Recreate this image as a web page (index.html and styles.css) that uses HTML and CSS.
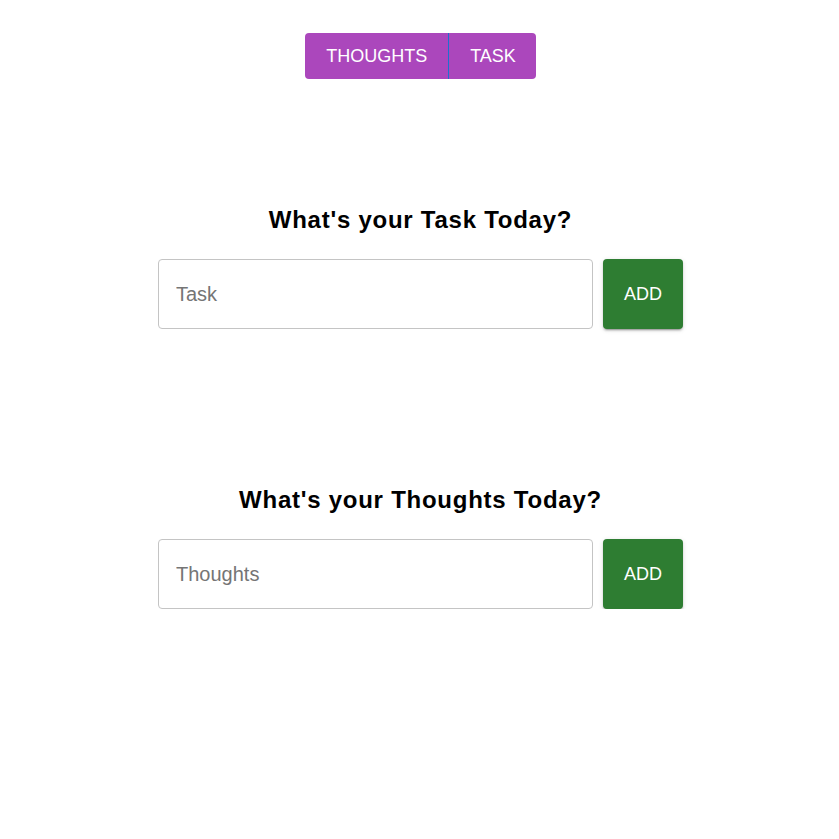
FILE: index.html
```html
<!DOCTYPE html>
<html>
<head>
<meta charset="utf-8">
<link rel="stylesheet" href="styles.css">
</head>
<body>
<div class="page">
  <div class="tabs">
    <button class="tab tab-first">THOUGHTS</button>
    <button class="tab tab-last">TASK</button>
  </div>
  <section class="block block-task">
    <h2 class="title">What's your Task Today?</h2>
    <div class="row">
      <input class="field" type="text" placeholder="Task">
      <button class="add">ADD</button>
    </div>
  </section>
  <section class="block block-thoughts">
    <h2 class="title">What's your Thoughts Today?</h2>
    <div class="row">
      <input class="field" type="text" placeholder="Thoughts">
      <button class="add">ADD</button>
    </div>
  </section>
</div>
</body>
</html>
```
FILE: styles.css
```css
* { box-sizing: border-box; }
html, body { margin: 0; padding: 0; background: #fff; }
body { font-family: "Liberation Sans", Arial, sans-serif; }
.page {
  display: flex;
  flex-direction: column;
  align-items: center;
  padding-top: 33px;
  padding-left: 2px;
}
.tabs {
  display: flex;
  border-radius: 4px;
  overflow: hidden;
}
.tab {
  height: 46px;
  padding: 0 21px;
  border: none;
  background: #ab47bc;
  color: #fff;
  font-family: "Liberation Sans", Arial, sans-serif;
  font-size: 18px;
  line-height: 46px;
  cursor: pointer;
}
.tab-first {
  border-right: 1px solid #1e6fd0;
}
.tab-last {
  padding-right: 20px;
}
.block {
  display: flex;
  flex-direction: column;
  align-items: center;
}
.block-task { margin-top: 127px; }
.block-thoughts { margin-top: 157px; }
.title {
  margin: 0;
  font-size: 24px;
  font-weight: bold;
  line-height: 28px;
  letter-spacing: 0.75px;
  color: #000;
}
.row {
  display: flex;
  gap: 10px;
  margin-top: 25px;
}
.field {
  width: 435px;
  height: 70px;
  border: 1px solid #c4c4c4;
  border-radius: 4px;
  padding: 0 17px;
  font-family: "Liberation Sans", Arial, sans-serif;
  font-size: 20px;
  color: #222;
  outline: none;
}
.field::placeholder { color: #757575; }
.add {
  width: 80px;
  height: 70px;
  border: none;
  border-radius: 4px;
  background: #2e7d32;
  color: #fff;
  font-family: "Liberation Sans", Arial, sans-serif;
  font-size: 18px;
  box-shadow: 0 3px 1px -2px rgba(0,0,0,0.2), 0 2px 2px 0 rgba(0,0,0,0.14), 0 1px 5px 0 rgba(0,0,0,0.12);
  cursor: pointer;
}
```
